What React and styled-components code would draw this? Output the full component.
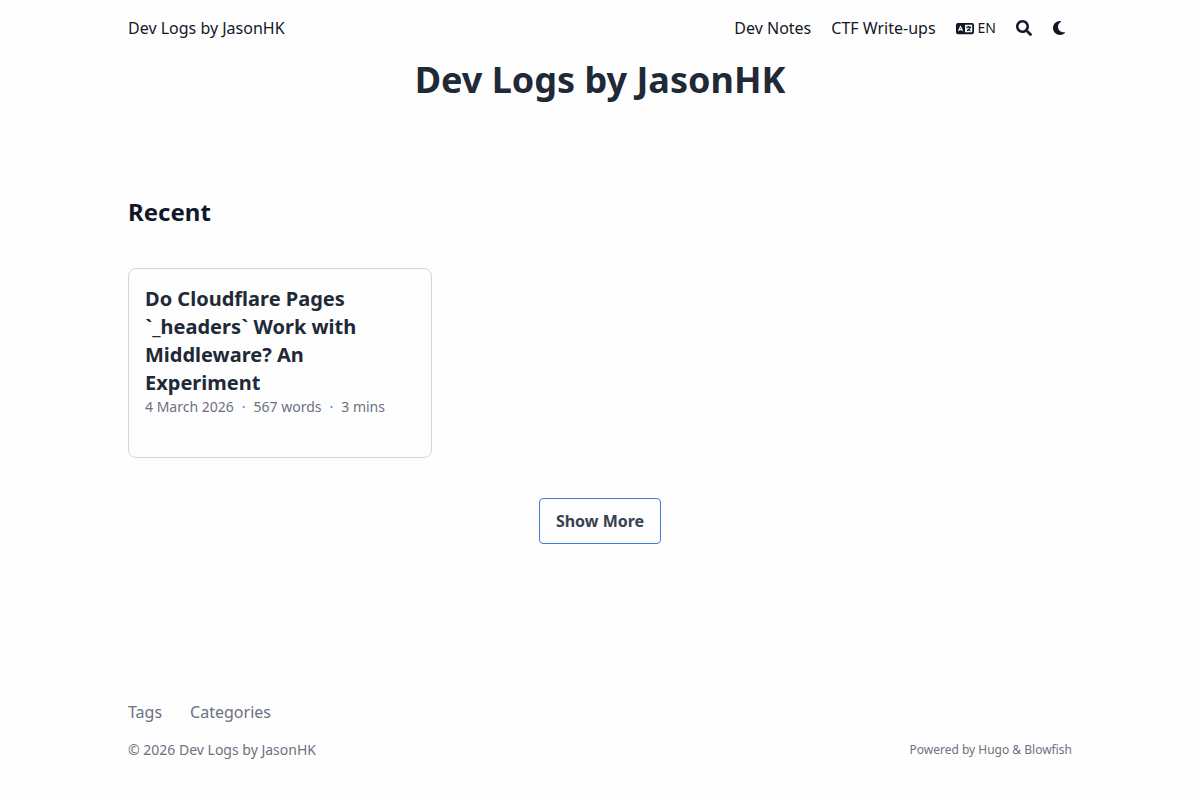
import styled, { createGlobalStyle } from "styled-components";
import { FaSearch } from "react-icons/fa";

const GlobalStyle = createGlobalStyle`
  *, *::before, *::after {
    box-sizing: border-box;
  }

  body {
    margin: 0;
    background: #fefefe;
    color: #111827;
    font-family: "Noto Sans", sans-serif;
    font-size: 16px;
    line-height: 24px;
  }

  h1, h2, h3, p {
    margin: 0;
  }

  a {
    color: inherit;
    text-decoration: none;
  }

  button {
    border: 0;
    padding: 0;
    background: none;
    color: inherit;
    font: inherit;
  }
`;

const Page = styled.div`
  display: flex;
  flex-direction: column;
  height: 800px;
  padding: 0 128px;
`;

const Header = styled.header`
  display: flex;
  align-items: center;
  justify-content: space-between;
  height: 56px;
`;

const Nav = styled.nav`
  display: flex;
  align-items: center;
  gap: 20px;
`;

const Language = styled.button`
  display: flex;
  align-items: center;
  gap: 4px;
  font-size: 14px;
`;

const IconButton = styled.button`
  display: flex;
  align-items: center;
  width: ${(props) => props.$width}px;
  height: 24px;
  padding-left: ${(props) => props.$inset || 0}px;
`;

const Main = styled.main`
  display: flex;
  flex: 1;
  flex-direction: column;
`;

const Title = styled.h1`
  color: #1f2937;
  font-size: 36px;
  font-weight: 700;
  line-height: 45px;
  margin-top: 1px;
  text-align: center;
`;

const SectionTitle = styled.h2`
  margin-top: 94px;
  font-size: 24px;
  font-weight: 700;
  line-height: 32px;
`;

const Grid = styled.section`
  display: grid;
  grid-template-columns: repeat(3, 304px);
  gap: 16px;
  margin-top: 40px;
`;

const Card = styled.article`
  height: 190px;
  padding: 16px;
  border: 1px solid #d1d5db;
  border-radius: 8px;
`;

const CardTitle = styled.h3`
  color: #1f2937;
  font-size: 20px;
  font-weight: 700;
  line-height: 28px;
`;

const Meta = styled.div`
  display: flex;
  gap: 8px;
  color: #6b7280;
  font-size: 14px;
  line-height: 20px;
`;

const Dot = styled.span`
  color: #3b82f6;
`;

const ShowMore = styled.button`
  align-self: center;
  height: 46px;
  margin-top: 40px;
  padding: 0 16px;
  border: 1px solid #3b82d6;
  border-radius: 4px;
  color: #374151;
  font-weight: 700;
`;

const Footer = styled.footer`
  padding-bottom: 40px;
  color: #6b7280;
`;

const FooterLinks = styled.nav`
  display: flex;
  gap: 28px;
  margin-bottom: 16px;
`;

const FooterBottom = styled.div`
  display: flex;
  align-items: center;
  justify-content: space-between;
  font-size: 14px;
  line-height: 20px;
`;

const Powered = styled.p`
  font-size: 12px;
  line-height: 16px;
`;

const LanguageIcon = () => (
  <svg width="18" height="15" viewBox="0 0 640 512" preserveAspectRatio="none" fill="currentColor">
    <path d="M0 128C0 92.7 28.7 64 64 64H256h48 16H576c35.3 0 64 28.7 64 64V384c0 35.3-28.7 64-64 64H320 304 256 64c-35.3 0-64-28.7-64-64V128zm320 0V384H576V128H320zM178.3 175.9c-3.2-7.2-10.4-11.9-18.3-11.9s-15.1 4.7-18.3 11.9l-64 144c-4.5 10.1 .1 21.9 10.2 26.4s21.9-.1 26.4-10.2l8.9-20.1h73.6l8.9 20.1c4.5 10.1 16.3 14.6 26.4 10.2s14.6-16.3 10.2-26.4l-64-144zM160 233.2L179 276H141L160 233.2zM448 164c11 0 20 9 20 20v4h44 16c11 0 20 9 20 20s-9 20-20 20h-2l-1.6 4.5c-8.9 24.4-22.4 46.6-39.6 65.4c.9 .6 1.8 1.1 2.7 1.6l18.9 11.3c9.5 5.7 12.5 18 6.9 27.4s-18 12.5-27.4 6.9l-18.9-11.3c-4.5-2.7-8.8-5.5-13.1-8.5c-10.6 7.5-21.9 14-34 19.4l-3.6 1.6c-10.1 4.5-21.9-.1-26.4-10.2s.1-21.9 10.2-26.4l3.6-1.6c6.4-2.9 12.6-6.1 18.5-9.8l-12.2-12.2c-7.8-7.8-7.8-20.5 0-28.3s20.5-7.8 28.3 0l14.6 14.6 .5 .5c12.4-13.1 22.5-28.3 29.8-45H448 376c-11 0-20-9-20-20s9-20 20-20h52v-4c0-11 9-20 20-20z" />
  </svg>
);

const MoonIcon = () => (
  <svg width="12" height="16" viewBox="0 0 384 512" fill="currentColor">
    <path d="M223.5 32C100 32 0 132.3 0 256S100 480 223.5 480c60.6 0 115.5-24.2 155.8-63.4c5-4.9 6.3-12.5 3.1-18.7s-10.1-9.7-17-8.5c-9.8 1.7-19.8 2.6-30.1 2.6c-96.9 0-175.5-78.8-175.5-176c0-65.8 36-123.1 89.3-153.3c6.1-3.5 9.2-10.5 7.7-17.3s-7.3-11.9-14.3-12.5c-6.3-.5-12.6-.8-19-.8z" />
  </svg>
);

const App = () => (
  <>
    <GlobalStyle />
    <Page>
      <Header>
        <a href="#home">Dev Logs by JasonHK</a>
        <Nav>
          <a href="#notes">Dev Notes</a>
          <a href="#ctf">CTF Write-ups</a>
          <Language>
            <LanguageIcon />
            EN
          </Language>
          <IconButton $width={16} aria-label="Search">
            <FaSearch size={16} />
          </IconButton>
          <IconButton $width={20} $inset={1} aria-label="Toggle appearance">
            <MoonIcon />
          </IconButton>
        </Nav>
      </Header>
      <Main>
        <Title>Dev Logs by JasonHK</Title>
        <SectionTitle>Recent</SectionTitle>
        <Grid>
          <Card>
            <CardTitle>
              Do Cloudflare Pages `_headers` Work with Middleware? An Experiment
            </CardTitle>
            <Meta>
              <time>4 March 2026</time>
              <Dot>·</Dot>
              <span>567 words</span>
              <Dot>·</Dot>
              <span>3 mins</span>
            </Meta>
          </Card>
        </Grid>
        <ShowMore>Show More</ShowMore>
      </Main>
      <Footer>
        <FooterLinks>
          <a href="#tags">Tags</a>
          <a href="#categories">Categories</a>
        </FooterLinks>
        <FooterBottom>
          <p>© 2026 Dev Logs by JasonHK</p>
          <Powered>Powered by Hugo &amp; Blowfish</Powered>
        </FooterBottom>
      </Footer>
    </Page>
  </>
);

export default App;
